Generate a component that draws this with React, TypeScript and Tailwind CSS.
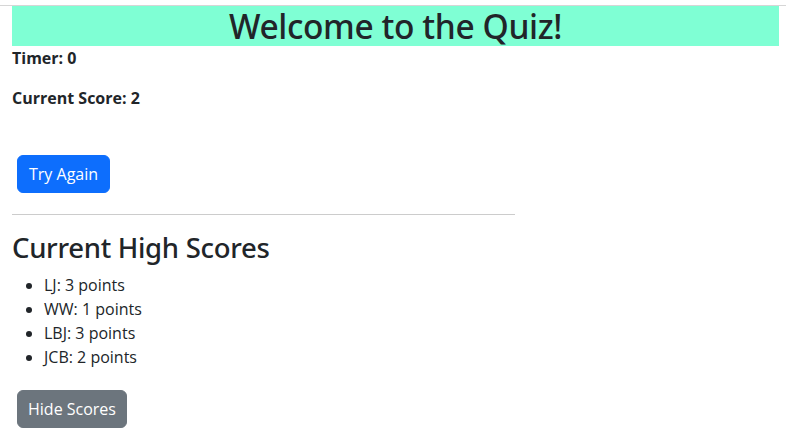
export default function App() {
  const scores = [
    { name: "LJ", points: 3 },
    { name: "WW", points: 1 },
    { name: "LBJ", points: 3 },
    { name: "JCB", points: 2 },
  ];

  return (
    <div className="min-h-screen bg-white text-[#212529] font-['Open_Sans',sans-serif] text-base leading-6">
      <div className="h-[5px]" />
      <div className="h-px bg-[#d6d6d6]" />
      <div className="pl-[12px] pr-[7px]">
        <h1 className="bg-[#7fffd4] text-center font-['Noto_Sans',sans-serif] text-[33.5px] leading-[1.2] font-medium h-[40px] tracking-[-0.4px]">
          Welcome to the Quiz!
        </h1>

        <p className="font-bold mb-4">Timer: 0</p>
        <p className="font-bold mb-4">Current Score: 2</p>
        <div className="h-6" />

        <button className="m-[5px] bg-[#0d6efd] text-white rounded-md border border-[#0d6efd] px-[11px] py-1.5 leading-6">
          Try Again
        </button>

        <hr className="w-[503px] my-4 border-0 border-t border-[#cccccc]" />

        <h2 className="font-['Noto_Sans',sans-serif] text-[27.5px] leading-[34px] font-medium mb-2 tracking-[-0.3px]">
          Current High Scores
        </h2>
        <ul className="list-disc pl-8 mb-4">
          {scores.map((s) => (
            <li key={s.name}>
              {s.name}: {s.points} points
            </li>
          ))}
        </ul>

        <button className="m-[5px] bg-[#6c757d] text-white rounded-md border border-[#6c757d] px-[10px] py-1.5 leading-6">
          Hide Scores
        </button>
      </div>
    </div>
  );
}
